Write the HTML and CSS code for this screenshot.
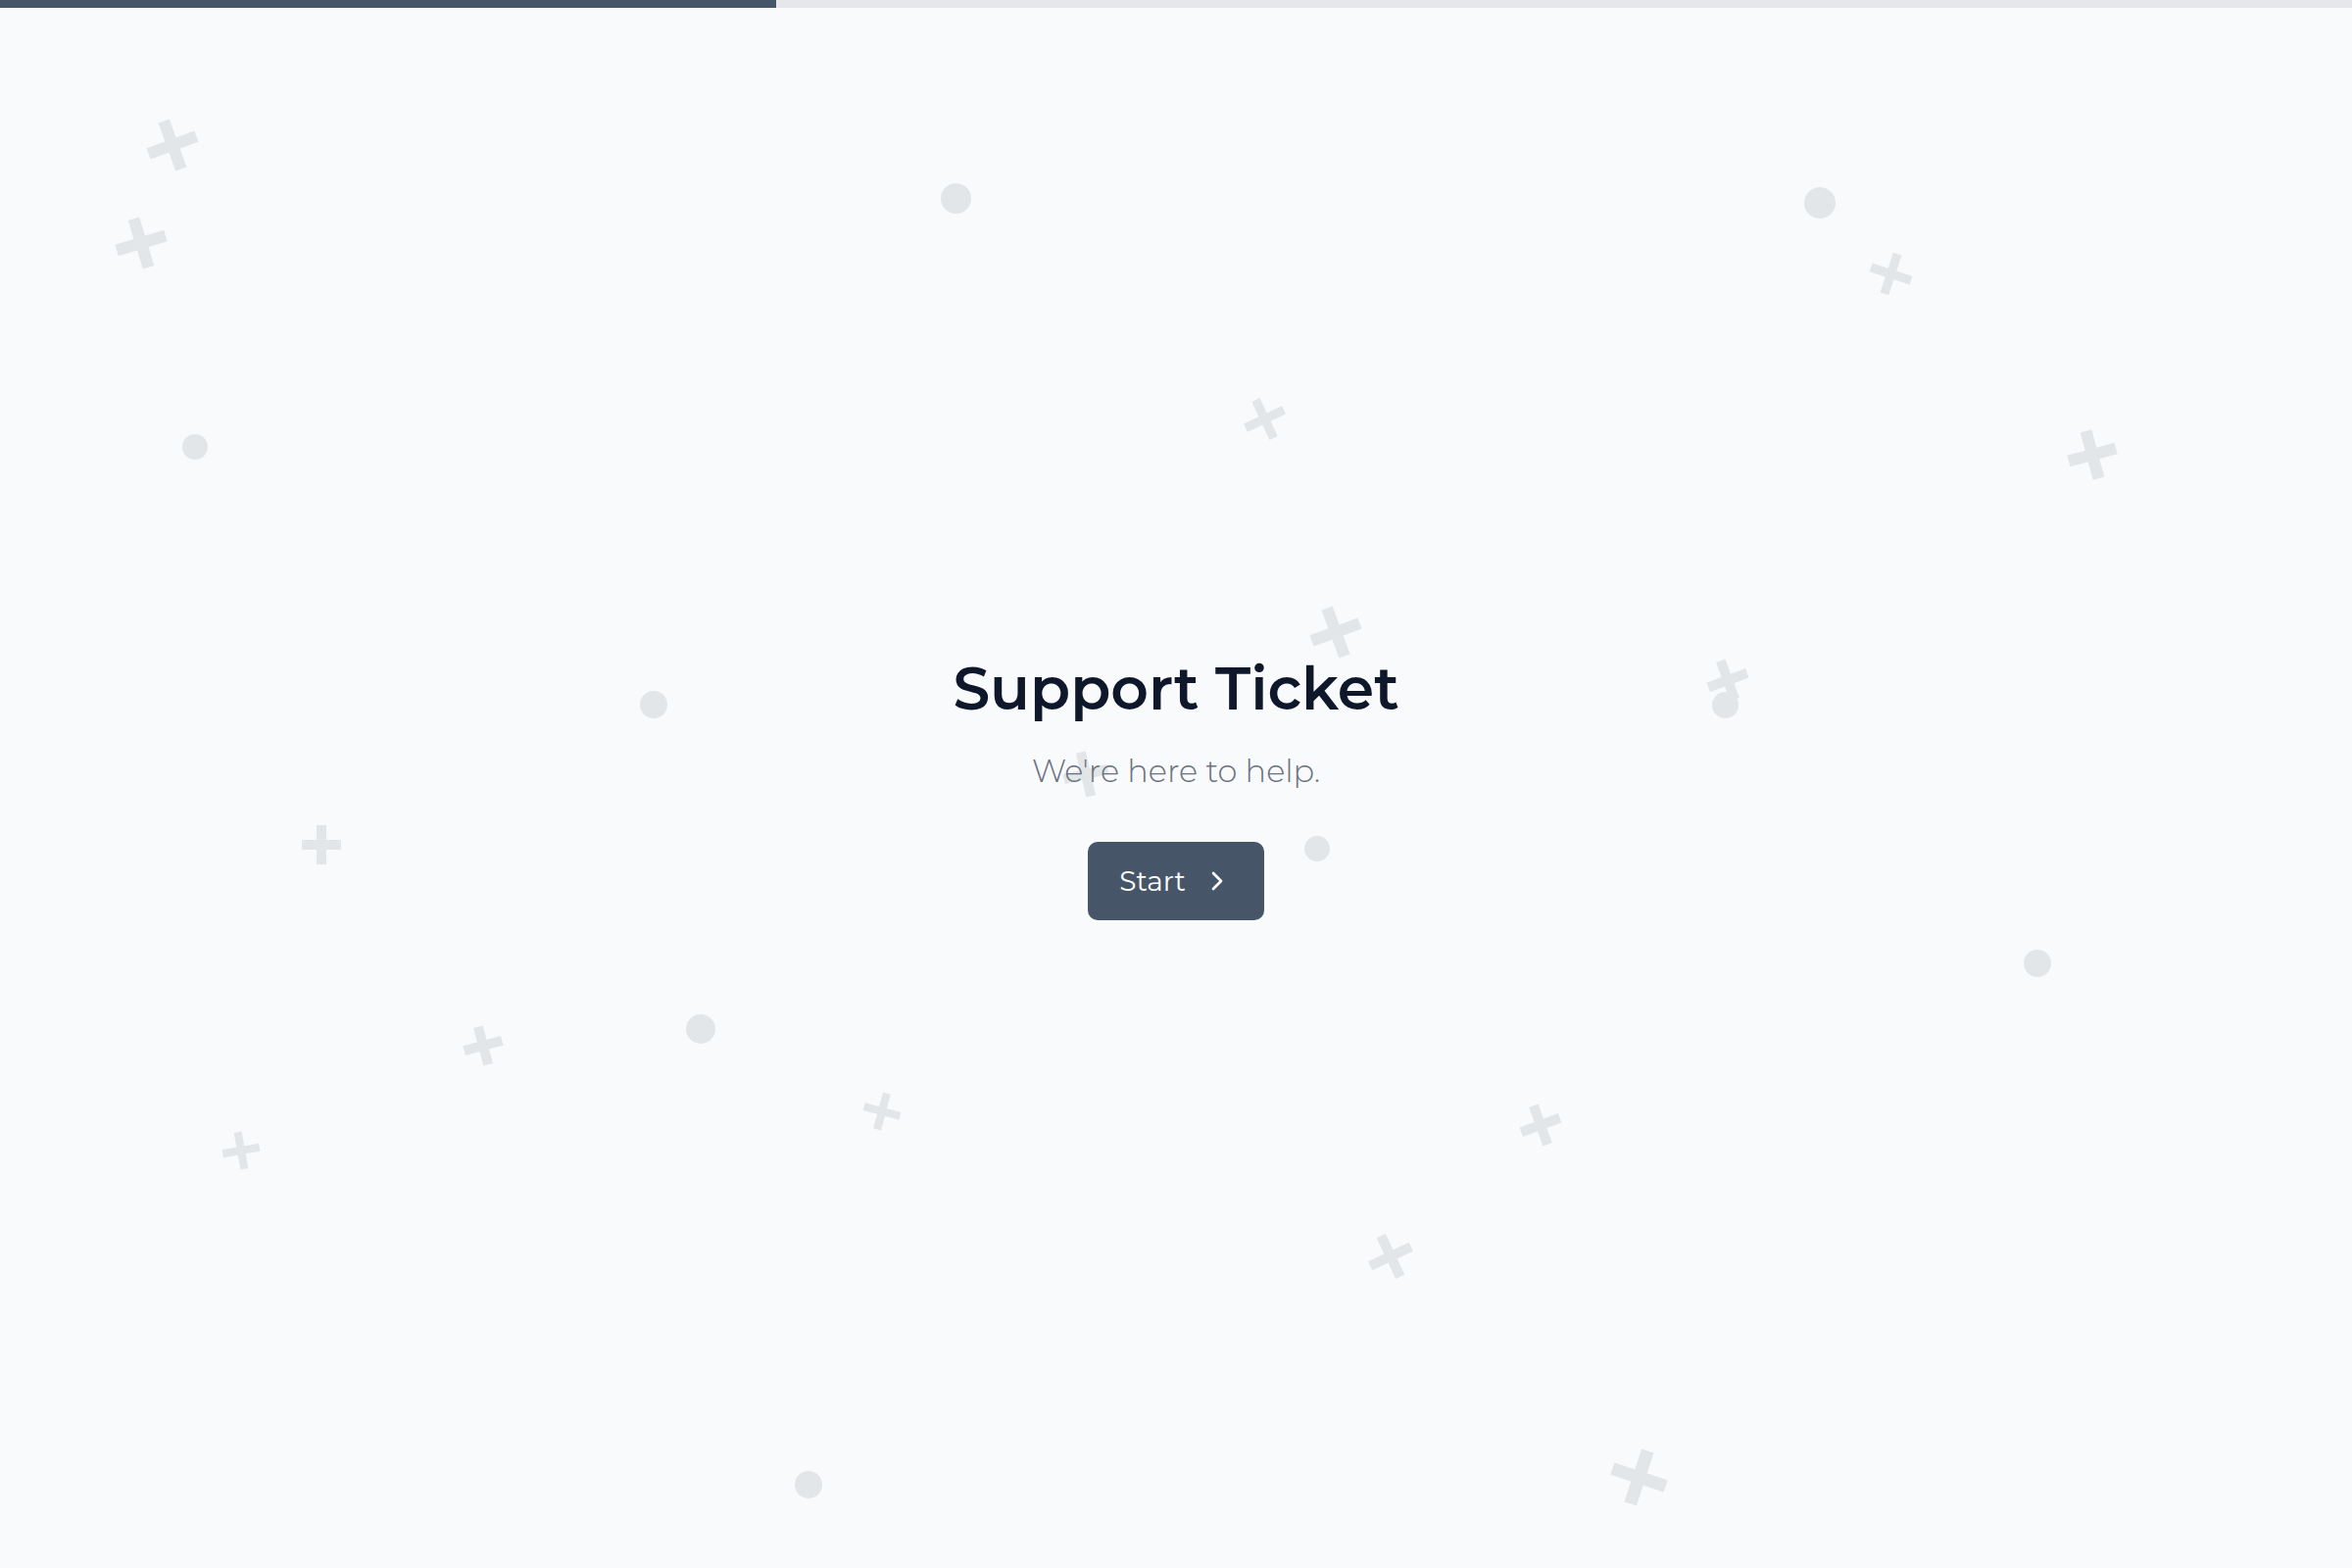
FILE: index.html
```html
<!DOCTYPE HTML>
<html>
<head>
<meta charset="utf-8">
<title>Support Ticket</title>
<link rel="stylesheet" href="styles.css">
</head>

<body>
	<div class="progress"><div class="progress-fill" style="width:33%"></div></div>

	<div class="decor">
		<!-- crosses -->
		<span class="plus" style="--x:176px;--y:148px;--s:52px;--r:-20deg"></span>
		<span class="plus" style="--x:144px;--y:248px;--s:52px;--r:-17deg"></span>
		<span class="plus" style="--x:1290px;--y:427px;--s:43px;--r:-25deg"></span>
		<span class="plus" style="--x:1929px;--y:279px;--s:43px;--r:18deg"></span>
		<span class="plus" style="--x:2135px;--y:464px;--s:50px;--r:-15deg"></span>
		<span class="plus" style="--x:1363px;--y:645px;--s:52px;--r:-20deg"></span>
		<span class="plus" style="--x:1763px;--y:694px;--s:42px;--r:-20deg"></span>
		<span class="plus" style="--x:328px;--y:862px;--s:40px;--r:0deg"></span>
		<span class="plus" style="--x:1108px;--y:790px;--s:46px;--r:-13deg"></span>
		<span class="plus" style="--x:493px;--y:1067px;--s:40px;--r:-15deg"></span>
		<span class="plus" style="--x:900px;--y:1134px;--s:38px;--r:15deg"></span>
		<span class="plus" style="--x:246px;--y:1174px;--s:38px;--r:-10deg"></span>
		<span class="plus" style="--x:1572px;--y:1148px;--s:42px;--r:-20deg"></span>
		<span class="plus" style="--x:1419px;--y:1282px;--s:46px;--r:-25deg"></span>
		<span class="plus" style="--x:1672px;--y:1507px;--s:57px;--r:18deg"></span>
		<!-- dots -->
		<span class="dot" style="--x:975px;--y:202px;--s:31px"></span>
		<span class="dot" style="--x:1857px;--y:207px;--s:32px"></span>
		<span class="dot" style="--x:199px;--y:456px;--s:26px"></span>
		<span class="dot" style="--x:667px;--y:719px;--s:28px"></span>
		<span class="dot" style="--x:1760px;--y:719px;--s:27px"></span>
		<span class="dot" style="--x:1344px;--y:866px;--s:26px"></span>
		<span class="dot" style="--x:2079px;--y:983px;--s:28px"></span>
		<span class="dot" style="--x:715px;--y:1050px;--s:30px"></span>
		<span class="dot" style="--x:825px;--y:1515px;--s:28px"></span>
	</div>

	<main class="hero">
		<h1 class="title">Support Ticket</h1>
		<p class="subtitle">We're here to help.</p>
		<button class="start-btn">
			<span>Start</span>
			<svg class="chev" viewBox="0 0 24 24" fill="none" stroke="currentColor" stroke-width="2" stroke-linecap="round" stroke-linejoin="round"><path d="m9 18 6-6-6-6"/></svg>
		</button>
	</main>
</body>
</html>
```

FILE: styles.css
```css
* {margin:0; padding:0; box-sizing:border-box;}
html, body {height:100%;}
body {background:#f8fafc; font-family:"Montserrat", "Inter", "DejaVu Sans", sans-serif; color:#0f172a; overflow:hidden; position:relative;}

.progress {position:absolute; top:0; left:0; right:0; height:8px; background:#e5e7eb; z-index:3;}
.progress-fill {height:100%; background:#475569;}

.decor {position:absolute; inset:0; z-index:0; pointer-events:none;}
.plus, .dot {position:absolute; left:calc(var(--x) - var(--s) / 2); top:calc(var(--y) - var(--s) / 2); width:var(--s); height:var(--s);}
.plus {transform:rotate(var(--r));}
.plus::before, .plus::after {content:""; position:absolute; background:#e3e6e9;}
.plus::before {left:0; right:0; top:38.5%; bottom:38.5%;}
.plus::after {top:0; bottom:0; left:38.5%; right:38.5%;}
.dot {border-radius:50%; background:#e3e6e9;}

.hero {position:relative; z-index:1; height:100%; display:flex; flex-direction:column; align-items:center; justify-content:center; padding-top:12px;}
.title {font-size:60px; line-height:1; font-weight:600; color:#0f172a;}
.subtitle {margin-top:36px; font-size:32px; line-height:36px; font-weight:300; color:#6b7280;}
.start-btn {margin-top:54px; display:flex; align-items:center; gap:16px; height:80px; padding:0 32px; border:0; border-radius:10px; background:#475569; color:#fff; font-family:inherit; font-size:28px; font-weight:400; cursor:pointer;}
.chev {width:32px; height:32px;}
```
